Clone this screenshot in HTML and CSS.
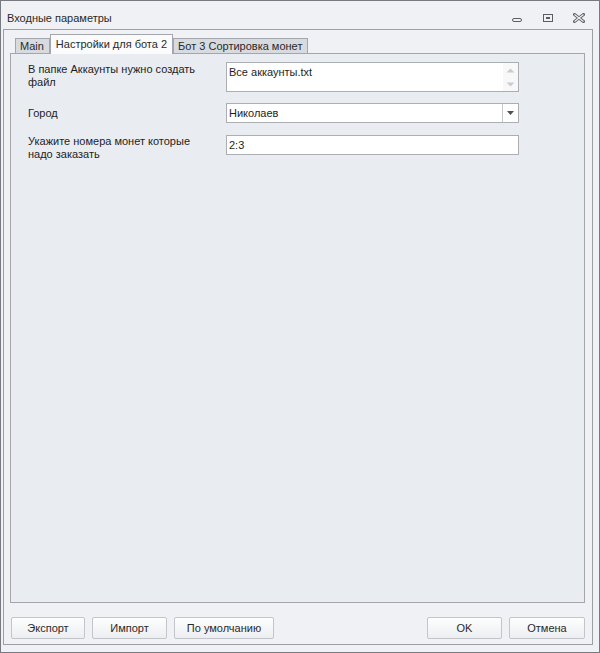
FILE: index.html
```html
<!DOCTYPE html>
<html lang="ru">
<head>
    <meta charset="UTF-8">
    <meta name="viewport" content="width=device-width, initial-scale=1.0">
    <title>Входные параметры</title>
    <link rel="stylesheet" href="styles.css">
</head>
<body>
    <div class="window">
        <div class="titlebar">
            <span class="title">Входные параметры</span>
            <div class="controls">
                <span class="ctl">
                    <svg width="12" height="10" viewBox="0 0 12 10"><rect x="1.5" y="5.5" width="9" height="3" rx="1.5" fill="none" stroke="#5a5d62"/></svg>
                </span>
                <span class="ctl">
                    <svg width="12" height="10" viewBox="0 0 12 10"><rect x="1.5" y="1.5" width="9" height="7" fill="none" stroke="#5a5d62"/><rect x="4.5" y="4.5" width="3" height="1" fill="none" stroke="#5a5d62"/></svg>
                </span>
                <span class="ctl">
                    <svg width="12" height="10" viewBox="0 0 12 10">
                        <path d="M1.5 1.5 L10.5 8.5 M10.5 1.5 L1.5 8.5" stroke="#5f6267" stroke-width="3" stroke-linecap="square"/>
                        <path d="M1.5 1.5 L10.5 8.5 M10.5 1.5 L1.5 8.5" stroke="#eff1f4" stroke-width="1.2"/>
                    </svg>
                </span>
            </div>
        </div>

        <div class="frame">
            <div class="tabs">
                <div class="tab">Main</div>
                <div class="tab active">Настройки для бота 2</div>
                <div class="tab">Бот 3 Сортировка монет</div>
            </div>

            <div class="panel">
                <div class="form">
                    <div class="label first">В папке Аккаунты нужно создать<br>файл</div>
                    <div class="memo">
                        <span class="memo-text">Все аккаунты.txt</span>
                        <span class="memo-scroll">
                            <svg width="9" height="5" viewBox="0 0 9 5"><path d="M0.5 4.5 L4.5 0.5 L8.5 4.5 Z" fill="#c9ccd1"/></svg>
                            <svg width="9" height="5" viewBox="0 0 9 5"><path d="M0.5 0.5 L4.5 4.5 L8.5 0.5 Z" fill="#c9ccd1"/></svg>
                        </span>
                    </div>

                    <div class="label city">Город</div>
                    <div class="combo">
                        <span class="combo-text">Николаев</span>
                        <span class="combo-btn">
                            <svg width="7" height="4" viewBox="0 0 7 4"><path d="M0 0 L7 0 L3.5 4 Z" fill="#4d5055"/></svg>
                        </span>
                    </div>

                    <div class="label coins">Укажите номера монет которые<br>надо заказать</div>
                    <div class="edit">2:3</div>
                </div>
            </div>

            <div class="buttons">
                <button class="btn w74">Экспорт</button>
                <button class="btn w75">Импорт</button>
                <button class="btn w100">По умолчанию</button>
                <span class="spacer"></span>
                <button class="btn w75">OK</button>
                <button class="btn w76">Отмена</button>
            </div>
        </div>
    </div>
</body>
</html>
```

FILE: styles.css
```css
body {
    margin: 0;
    font-family: "Liberation Sans", Tahoma, sans-serif;
    font-size: 11px;
    color: #1e1e1e;
}

.window {
    width: 600px;
    height: 653px;
    box-sizing: border-box;
    border: 1px solid #777b81;
    background-color: #eff1f4;
    display: flex;
    flex-direction: column;
}

.titlebar {
    height: 28px;
    box-sizing: border-box;
    padding: 5px 14px 0 6px;
    display: flex;
    align-items: center;
}

.title {
    flex: 1;
    color: #2a2a2a;
}

.controls {
    display: flex;
    gap: 19px;
}

.ctl {
    display: flex;
    width: 12px;
    height: 10px;
}

.frame {
    flex: 1;
    margin: 0 6px 7px 2px;
    border: 1px solid #9ca0a6;
    padding: 4px 7px 5px 6px;
    display: flex;
    flex-direction: column;
}

.tabs {
    height: 19px;
    display: flex;
    align-items: flex-end;
    padding-left: 5px;
}

.tab {
    height: 15px;
    box-sizing: border-box;
    border: 1px solid #a3a7ad;
    border-bottom: none;
    background-color: #d7dadf;
    padding: 0 5px 0 4px;
    line-height: 14px;
    color: #2a2a2a;
}

.tab.active {
    height: 20px;
    margin-bottom: -1px;
    padding: 0 5px;
    line-height: 19px;
    background-color: #fbfbfc;
    position: relative;
    z-index: 1;
}

.panel {
    flex: 1;
    border: 1px solid #a3a7ad;
    background-color: #e9ecf1;
    padding: 8px 0 0 17px;
}

.form {
    display: grid;
    grid-template-columns: 198px 293px;
    align-items: start;
}

.label {
    line-height: 13px;
}

.label.first {
    margin-top: 1px;
}

.label.city {
    margin-top: 15px;
}

.label.coins {
    margin-top: 12px;
}

.memo,
.combo,
.edit {
    box-sizing: border-box;
    border: 1px solid #abaeb3;
    background-color: #fff;
}

.memo {
    height: 30px;
    display: flex;
}

.memo-text {
    flex: 1;
    padding: 2px 2px;
    line-height: 14px;
}

.memo-scroll {
    width: 15px;
    display: flex;
    flex-direction: column;
    align-items: center;
    justify-content: space-between;
    padding: 5px 0 4px;
    background-color: #f8f8f9;
}

.combo {
    height: 20px;
    margin-top: 11px;
    display: flex;
}

.combo-text {
    flex: 1;
    padding-left: 2px;
    line-height: 18px;
}

.combo-btn {
    width: 15px;
    border-left: 1px solid #c3c6cb;
    display: flex;
    align-items: center;
    justify-content: center;
}

.edit {
    height: 20px;
    margin-top: 12px;
    padding-left: 2px;
    line-height: 18px;
}

.buttons {
    margin-top: 14px;
    padding-left: 1px;
    display: flex;
    gap: 7px;
}

.spacer {
    flex: 1;
}

.btn {
    height: 22px;
    box-sizing: border-box;
    border: 1px solid #c2c5ca;
    border-radius: 2px;
    background: linear-gradient(#fefefe, #eceef1);
    font-family: "Liberation Sans", Tahoma, sans-serif;
    font-size: 11px;
    color: #2a2a2a;
    padding: 0;
}

.w74 { width: 74px; }
.w75 { width: 75px; }
.w76 { width: 76px; }
.w100 { width: 100px; }
```
